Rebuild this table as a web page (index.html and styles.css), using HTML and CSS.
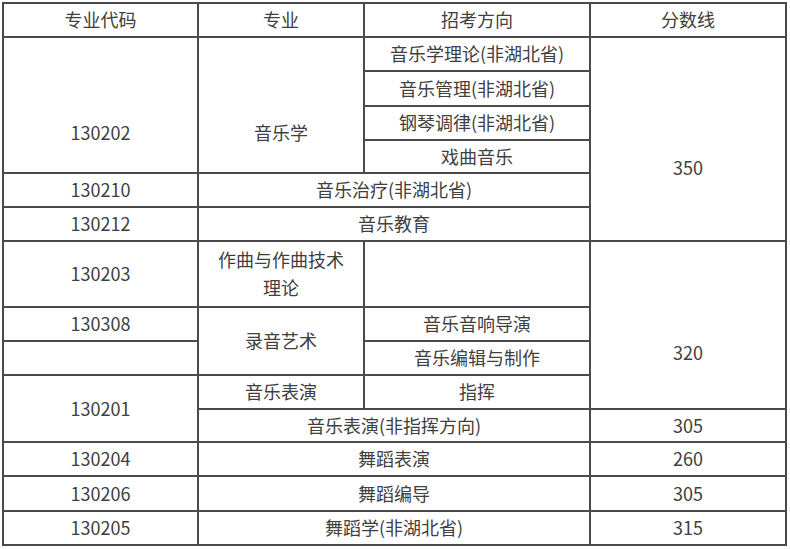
FILE: index.html
```html
<!DOCTYPE html>
<html lang="zh-CN">
<head>
<meta charset="utf-8">
<title>分数线</title>
<link rel="stylesheet" href="styles.css">
</head>
<body>
<table class="score-table">
  <colgroup>
    <col class="c1"><col class="c2"><col class="c3"><col class="c4">
  </colgroup>
  <tr class="h34">
    <td>专业代码</td><td>专业</td><td>招考方向</td><td>分数线</td>
  </tr>
  <tr class="h34">
    <td rowspan="4" class="shift">130202</td>
    <td rowspan="4" class="shift">音乐学</td>
    <td>音乐学理论(非湖北省)</td>
    <td rowspan="6" class="shift2">350</td>
  </tr>
  <tr class="h35"><td>音乐管理(非湖北省)</td></tr>
  <tr class="h34"><td>钢琴调律(非湖北省)</td></tr>
  <tr class="h33"><td>戏曲音乐</td></tr>
  <tr class="h34"><td>130210</td><td colspan="2">音乐治疗(非湖北省)</td></tr>
  <tr class="h34"><td>130212</td><td colspan="2">音乐教育</td></tr>
  <tr class="h66">
    <td>130203</td>
    <td class="two">作曲与作曲技术<br>理论</td>
    <td></td>
    <td rowspan="4" class="shift">320</td>
  </tr>
  <tr class="h34"><td>130308</td><td rowspan="2">录音艺术</td><td>音乐音响导演</td></tr>
  <tr class="h34"><td></td><td>音乐编辑与制作</td></tr>
  <tr class="h34"><td rowspan="2">130201</td><td>音乐表演</td><td>指挥</td></tr>
  <tr class="h33"><td colspan="2">音乐表演(非指挥方向)</td><td>305</td></tr>
  <tr class="h34"><td>130204</td><td colspan="2">舞蹈表演</td><td>260</td></tr>
  <tr class="h35"><td>130206</td><td colspan="2">舞蹈编导</td><td>305</td></tr>
  <tr class="h34"><td>130205</td><td colspan="2">舞蹈学(非湖北省)</td><td>315</td></tr>
</table>
</body>
</html>
```

FILE: styles.css
```css
html, body {
  margin: 0;
  padding: 0;
  background: #ffffff;
}

body {
  padding: 2px 0 0 2px;
  font-family: "Noto Sans CJK SC", "Noto Sans", sans-serif;
  font-size: 18px;
  color: #404040;
}

.score-table {
  border-collapse: separate;
  border-spacing: 0;
  table-layout: fixed;
  width: 785px;
  border-left: 2px solid #4a4a4a;
  border-top: 2px solid #4a4a4a;
}

.score-table td {
  border-right: 2px solid #4a4a4a;
  border-bottom: 2px solid #4a4a4a;
  padding: 0 0 2px 0;
  text-align: center;
  vertical-align: middle;
  line-height: 24px;
  white-space: nowrap;
}

.c1 { width: 195px; }
.c2 { width: 166px; }
.c3 { width: 226px; }
.c4 { width: 196px; }

.h33 { height: 33px; }
.h34 { height: 34px; }
.h35 { height: 35px; }
.h66 { height: 66px; }

.score-table td.shift { padding-top: 56px; }
.score-table td.shift2 { padding-top: 58px; }
.score-table td.two { line-height: 28px; }
```
